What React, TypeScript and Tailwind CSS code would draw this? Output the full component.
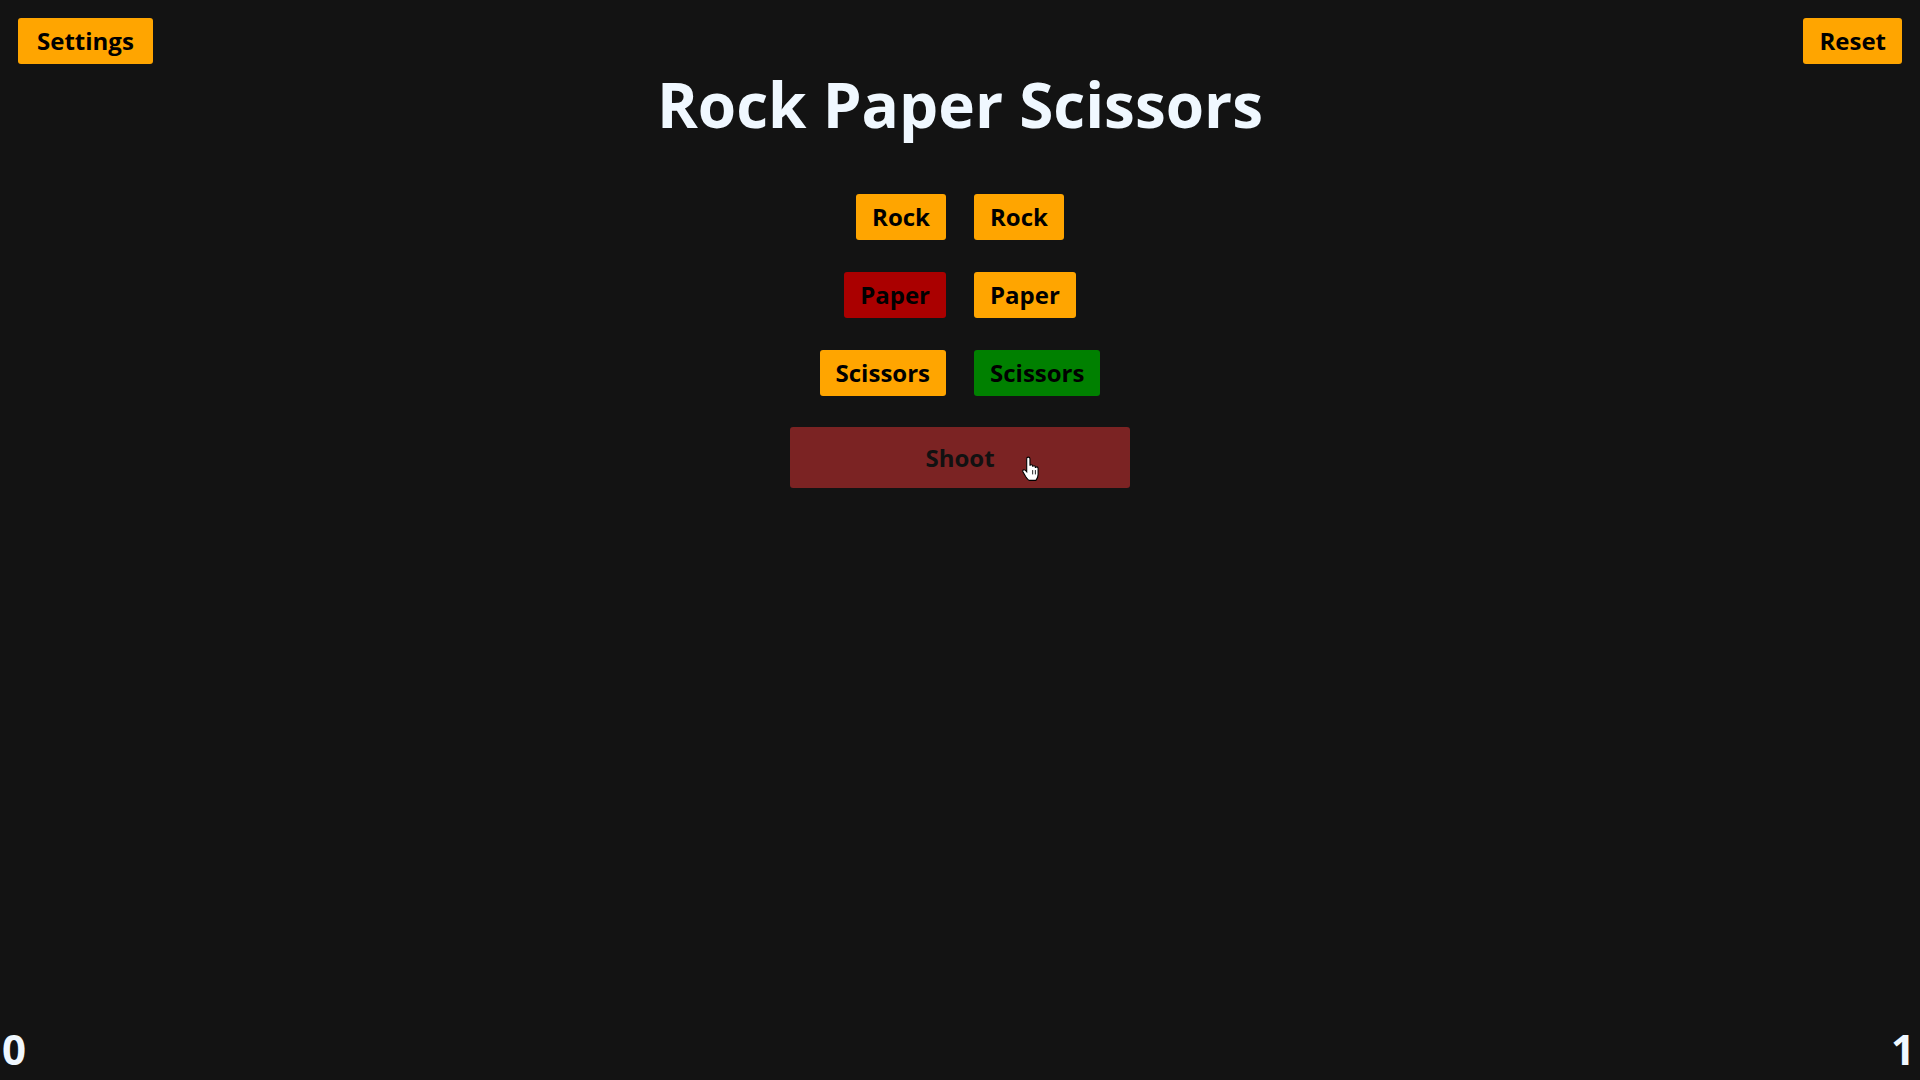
import { useState } from "react";

type Choice = "Rock" | "Paper" | "Scissors";

const choices: Choice[] = ["Rock", "Paper", "Scissors"];

const btn =
  "rounded-[3px] px-4 h-[46px] text-[24px] font-bold text-black leading-none";

const HandCursor = () => (
  <svg
    width="19"
    height="26"
    viewBox="0 0 17 24"
    className="absolute left-[231px] top-[29px] pointer-events-none"
  >
    <path
      d="M5 2.5 Q5 1 6.5 1 Q8 1 8 2.5 V9 Q8 8 9.25 8 Q10.5 8 10.5 9.5 V10 Q10.5 9 11.75 9 Q13 9 13 10.5 V11 Q13 10 14.25 10 Q15.5 10 15.5 11.5 V17 Q15.5 20 13.5 22.5 H7 Q5.5 21.5 4 19 L1.5 14.5 Q1 13 2.3 12.7 Q3.5 12.5 5 14.5 Z"
      fill="#fff"
      stroke="#000"
      strokeWidth="1"
    />
    <path d="M10.5 13 V17 M13 13 V17" stroke="#000" strokeWidth="0.8" />
  </svg>
);

const App = () => {
  const [player] = useState<Choice>("Paper");
  const [cpu] = useState<Choice>("Scissors");
  const [score] = useState({ you: 0, cpu: 1 });

  return (
    <div
      className="h-screen w-full bg-[#131313] flex flex-col"
      style={{ fontFamily: "'Open Sans', 'Noto Sans', sans-serif" }}
    >
      {/* TOP */}
      <div className="flex items-start justify-between px-[18px] pt-[18px]">
        <button className={`${btn} h-[45px] bg-[#ffa500] px-[19px]`}>Settings</button>
        <button className={`${btn} h-[45px] bg-[#ffa500] px-[16px]`}>Reset</button>
      </div>

      <h1 className="text-center text-[#f0f8ff] text-[62px] font-bold leading-none mt-[9px]">
        Rock Paper Scissors
      </h1>

      {/* CHOICES */}
      <div className="mt-[59px] flex flex-col gap-[32px]">
        {choices.map(c => (
          <div key={c} className="grid grid-cols-2 gap-[28px]">
            <div className="flex justify-end">
              <button
                className={`${btn} ${
                  c === player ? "bg-[#aa0000]" : "bg-[#ffa500]"
                }`}
              >
                {c}
              </button>
            </div>
            <div className="flex justify-start">
              <button
                className={`${btn} ${
                  c === cpu ? "bg-[#008000]" : "bg-[#ffa500]"
                }`}
              >
                {c}
              </button>
            </div>
          </div>
        ))}
      </div>

      <div className="flex justify-center mt-[31px]">
        <button className="relative w-[340px] h-[61px] rounded-[3px] bg-[#7b2323] text-[24px] font-bold text-[#111]">
          Shoot
          <HandCursor />
        </button>
      </div>

      {/* SCORE */}
      <div className="mt-auto flex justify-between items-end px-[2px] pb-[10px] text-[42px] font-bold text-[#f0f8ff] leading-none">
        <span>{score.you}</span>
        <span className="pr-[3px]">{score.cpu}</span>
      </div>
    </div>
  );
};

export default App;
